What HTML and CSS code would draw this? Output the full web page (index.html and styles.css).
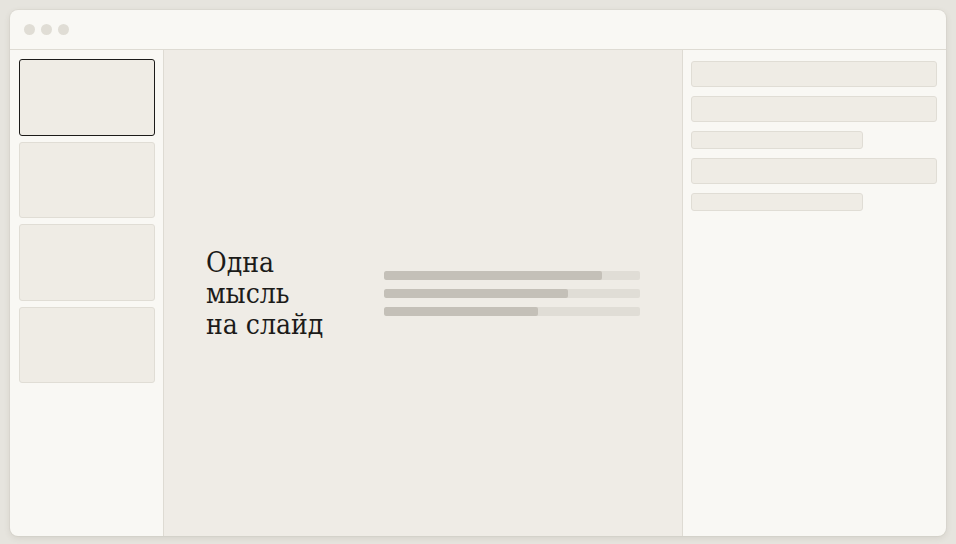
FILE: index.html
```html
<!DOCTYPE html>
<html lang="ru">

<head>
    <meta charset="UTF-8">
    <meta name="viewport" content="width=device-width, initial-scale=1.0">
    <title>Одна мысль на слайд</title>
    <link rel="stylesheet" href="styles.css">
</head>

<body>
    <div class="window">
        <!-- заголовок окна -->
        <div class="titlebar">
            <span class="dot"></span>
            <span class="dot"></span>
            <span class="dot"></span>
        </div>

        <div class="workspace">
            <!-- миниатюры слайдов -->
            <div class="slides">
                <div class="thumb active"></div>
                <div class="thumb"></div>
                <div class="thumb"></div>
                <div class="thumb"></div>
            </div>

            <!-- текущий слайд -->
            <div class="stage">
                <div class="slide-title">Одна<br>мысль<br>на слайд</div>
                <div class="bars">
                    <div class="bar"><div class="fill" style="width: 85%"></div></div>
                    <div class="bar"><div class="fill" style="width: 72%"></div></div>
                    <div class="bar"><div class="fill" style="width: 60%"></div></div>
                </div>
            </div>

            <!-- свойства -->
            <div class="panel">
                <div class="field"></div>
                <div class="field"></div>
                <div class="field short"></div>
                <div class="field"></div>
                <div class="field short"></div>
            </div>
        </div>
    </div>
</body>

</html>
```

FILE: styles.css
```css
* {
    box-sizing: border-box;
}

html,
body {
    height: 100%;
}

body {
    margin: 0;
    padding: 10px 10px 8px;
    background-color: #e6e4de;
    font-family: "DejaVu Serif", serif;
}

.window {
    height: 100%;
    display: flex;
    flex-direction: column;
    background-color: #f9f8f4;
    border-radius: 8px;
    overflow: hidden;
    box-shadow: 0 2px 6px rgba(80, 70, 50, 0.12), 0 0 0 1px rgba(80, 70, 50, 0.04);
}

.titlebar {
    height: 40px;
    flex-shrink: 0;
    display: flex;
    align-items: center;
    gap: 6px;
    padding-left: 14px;
    border-bottom: 1px solid #dedbd3;
}

.dot {
    width: 11px;
    height: 11px;
    border-radius: 50%;
    background-color: #e0ddd5;
}

.workspace {
    flex: 1;
    display: flex;
    min-height: 0;
}

/* левая колонка */
.slides {
    width: 154px;
    flex-shrink: 0;
    display: flex;
    flex-direction: column;
    gap: 6px;
    padding: 9px 8px 0 9px;
    border-right: 1px solid #dedbd3;
}

.thumb {
    width: 136px;
    aspect-ratio: 16 / 9;
    flex-shrink: 0;
    background-color: #efece5;
    border: 1px solid #e0ddd5;
    border-radius: 3px;
}

.thumb.active {
    border-color: #1c1b19;
}

/* центр */
.stage {
    flex: 1;
    display: flex;
    align-items: center;
    justify-content: space-between;
    padding: 0 42px;
    background-color: #efece6;
}

.slide-title {
    font-family: "DejaVu Serif Condensed", "DejaVu Serif", serif;
    font-stretch: condensed;
    font-size: 28px;
    line-height: 31px;
    color: #1c1b19;
}

.bars {
    width: 256px;
    display: flex;
    flex-direction: column;
    gap: 9px;
}

.bar {
    height: 9px;
    background-color: #e0ddd6;
    border-radius: 2px;
    overflow: hidden;
}

.fill {
    height: 100%;
    background-color: #c4c0b8;
    border-radius: 2px;
}

/* правая колонка */
.panel {
    width: 264px;
    flex-shrink: 0;
    display: flex;
    flex-direction: column;
    align-items: flex-start;
    gap: 9px;
    padding: 11px 9px 0 8px;
    border-left: 1px solid #dedbd3;
}

.field {
    width: 100%;
    height: 26px;
    background-color: #efece5;
    border: 1px solid #e0ddd5;
    border-radius: 3px;
}

.field.short {
    width: 70%;
    height: 18px;
}
```
